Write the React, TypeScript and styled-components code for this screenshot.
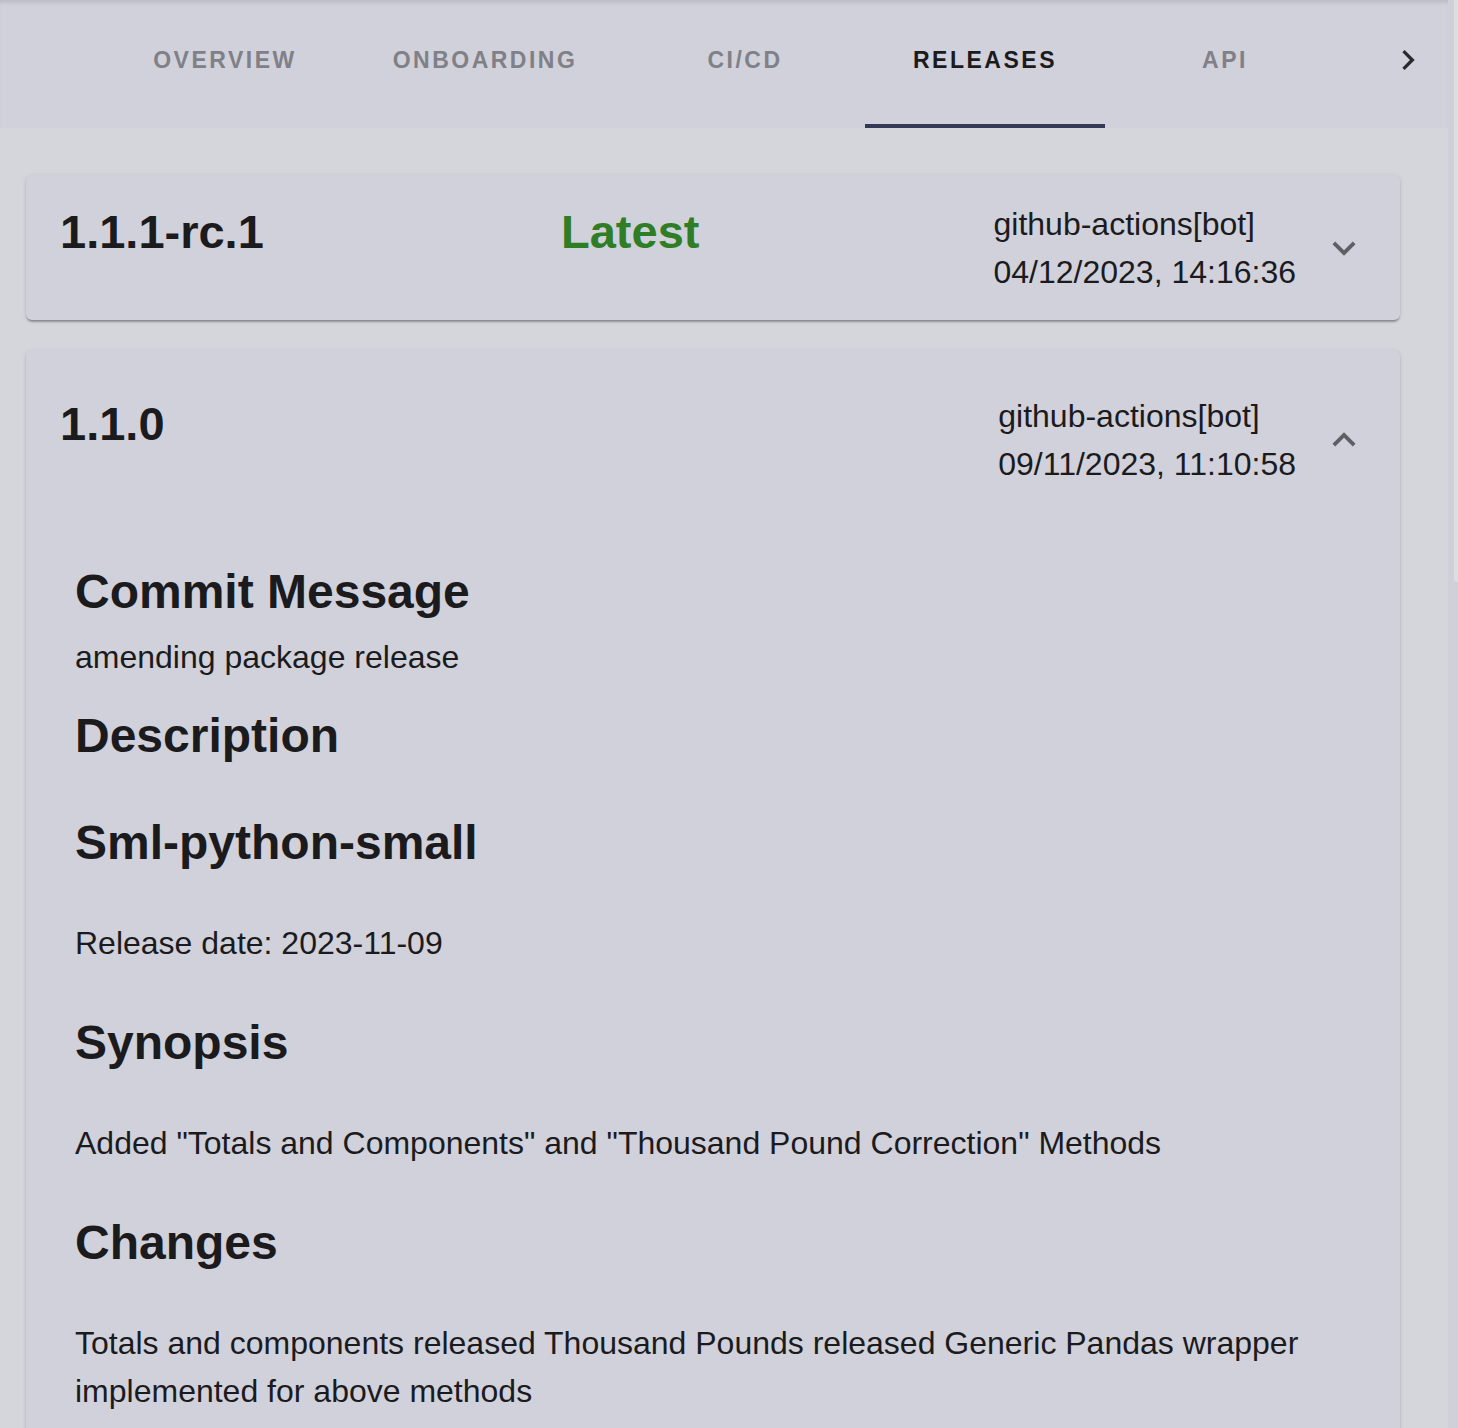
import React, { ReactElement, useState } from 'react';
import styled, { createGlobalStyle } from 'styled-components';

const GlobalStyle = createGlobalStyle`
    html, body {
        margin: 0;
        padding: 0;
        height: 1428px;
        overflow: hidden;
        background: #d5d6dc;
        font-family: "Liberation Sans", Arial, Helvetica, sans-serif;
        color: #1b1b1d;
    }
`

const Shell = styled.div`
    display: flex;
    height: 1428px;
    overflow: hidden;
`

const Main = styled.div`
    flex: 1;
    min-width: 0;
    background: #d5d6dc;
`

const ScrollTrack = styled.div`
    width: 10px;
    flex-shrink: 0;
    background: #d0d0da;
    display: flex;
    justify-content: flex-end;
`

const ScrollThumb = styled.div`
    width: 4px;
    height: 582px;
    background: #dedee0;
    border-radius: 0 0 0 4px;
`

const TabBar = styled.div`
    display: flex;
    align-items: stretch;
    height: 128px;
    background: #d1d1db;
    box-shadow: inset 0 5px 5px -3px rgba(0, 0, 0, 0.13);
`

const ScrollButton = styled.div<{ $hidden?: boolean }>`
    width: ${p => (p.$hidden ? '105px' : '80px')};
    flex-shrink: 0;
    display: flex;
    align-items: flex-start;
    justify-content: center;
    padding-top: 40px;
    color: #2a2a2e;
    visibility: ${p => (p.$hidden ? 'hidden' : 'visible')};
    margin-left: ${p => (p.$hidden ? '0' : 'auto')};
`

const Tab = styled.div<{ $active?: boolean; $width: number }>`
    position: relative;
    width: ${p => p.$width}px;
    flex-shrink: 0;
    display: flex;
    justify-content: center;
    padding-top: 48px;
    box-sizing: border-box;
    font-size: 23px;
    line-height: 24px;
    letter-spacing: 2.5px;
    font-weight: 700;
    color: ${p => (p.$active ? '#1b1b1d' : '#808087')};
    cursor: pointer;

    &::after {
        content: '';
        display: ${p => (p.$active ? 'block' : 'none')};
        position: absolute;
        left: 0;
        right: 0;
        bottom: 0;
        height: 4px;
        background: #343a55;
    }
`

const Releases = styled.div`
    display: flex;
    flex-direction: column;
    gap: 30px;
    padding: 47px 48px 0 26px;
`

const Card = styled.div`
    background: #d1d1db;
    border-radius: 6px;
    box-shadow: 0 3px 2px -1px rgba(0, 0, 0, 0.25), 0 1px 2px rgba(0, 0, 0, 0.12), 0 1px 5px rgba(0, 0, 0, 0.08);
`

const Summary = styled.div<{ $open?: boolean }>`
    display: flex;
    align-items: flex-start;
    padding: ${p => (p.$open ? '42px 33px 42px 34px' : '24.5px 33px 24.5px 34px')};
    cursor: pointer;
`

const Version = styled.div`
    width: 501px;
    flex-shrink: 0;
    font-size: 47px;
    line-height: 64px;
    font-weight: 700;
`

const LatestTag = styled.div`
    font-size: 47px;
    line-height: 64px;
    font-weight: 700;
    color: #2f7d25;
`

const Meta = styled.div`
    margin-left: auto;
    font-size: 32px;
    line-height: 48px;
    color: #1b1b1d;
`

const ExpandIcon = styled.div`
    width: 46px;
    height: 46px;
    margin-left: 25px;
    align-self: center;
    color: #5e5e65;
    display: flex;
`

const Details = styled.div`
    padding: 34px 49px 40px 49px;
`

const SectionTitle = styled.h3<{ $gap: number }>`
    margin: ${p => p.$gap}px 0 0;
    font-size: 48px;
    line-height: 56px;
    font-weight: 700;
`

const BodyText = styled.p`
    margin: 13px 0 0;
    font-size: 32px;
    line-height: 48px;
`

const Markdown = styled.div`
    display: flex;
    flex-direction: column;
    gap: 48px;
    margin-top: 51px;

    h2 {
        margin: 0;
        font-size: 48px;
        line-height: 56px;
        font-weight: 700;
    }

    p {
        margin: 0;
        font-size: 32px;
        line-height: 48px;
    }
`

const Chevron = ({ up }: { up?: boolean }) => (
    <svg width="46" height="46" viewBox="0 0 24 24" fill="currentColor">
        {up
            ? <path d="m12 8-6 6 1.41 1.41L12 10.83l4.59 4.58L18 14z" />
            : <path d="M16.59 8.59 12 13.17 7.41 8.59 6 10l6 6 6-6z" />}
    </svg>
)

const tabs = [
    { label: 'OVERVIEW', width: 240 },
    { label: 'ONBOARDING', width: 280 },
    { label: 'CI/CD', width: 240 },
    { label: 'RELEASES', width: 240 },
    { label: 'API', width: 240 },
]

export default function App(): ReactElement {
    const [active, setActive] = useState('RELEASES');
    const [open, setOpen] = useState<string | null>('1.1.0');

    const toggle = (v: string) => setOpen(open === v ? null : v);

    return (
        <Shell>
            <GlobalStyle />
            <Main>
                <TabBar>
                    <ScrollButton $hidden />
                    {tabs.map(t => (
                        <Tab key={t.label} $width={t.width} $active={active === t.label} onClick={() => setActive(t.label)}>
                            {t.label}
                        </Tab>
                    ))}
                    <ScrollButton>
                        <svg width="40" height="40" viewBox="0 0 24 24" fill="currentColor">
                            <path d="M8.59 16.59 13.17 12 8.59 7.41 10 6l6 6-6 6z" />
                        </svg>
                    </ScrollButton>
                </TabBar>

                <Releases>
                    <Card>
                        <Summary $open={open === '1.1.1-rc.1'} onClick={() => toggle('1.1.1-rc.1')}>
                            <Version>1.1.1-rc.1</Version>
                            <LatestTag>Latest</LatestTag>
                            <Meta>
                                github-actions[bot]
                                <br />
                                04/12/2023, 14:16:36
                            </Meta>
                            <ExpandIcon><Chevron up={open === '1.1.1-rc.1'} /></ExpandIcon>
                        </Summary>
                    </Card>

                    <Card>
                        <Summary $open={open === '1.1.0'} onClick={() => toggle('1.1.0')}>
                            <Version>1.1.0</Version>
                            <Meta>
                                github-actions[bot]
                                <br />
                                09/11/2023, 11:10:58
                            </Meta>
                            <ExpandIcon><Chevron up={open === '1.1.0'} /></ExpandIcon>
                        </Summary>
                        {open === '1.1.0' && (
                            <Details>
                                <SectionTitle $gap={0}>Commit Message</SectionTitle>
                                <BodyText>amending package release</BodyText>
                                <SectionTitle $gap={27}>Description</SectionTitle>
                                <Markdown>
                                    <h2>Sml-python-small</h2>
                                    <p>Release date: 2023-11-09</p>
                                    <h2>Synopsis</h2>
                                    <p>Added "Totals and Components" and "Thousand Pound Correction" Methods</p>
                                    <h2>Changes</h2>
                                    <p>Totals and components released Thousand Pounds released Generic Pandas wrapper implemented for above methods</p>
                                </Markdown>
                            </Details>
                        )}
                    </Card>
                </Releases>
            </Main>
            <ScrollTrack>
                <ScrollThumb />
            </ScrollTrack>
        </Shell>
    )
}
